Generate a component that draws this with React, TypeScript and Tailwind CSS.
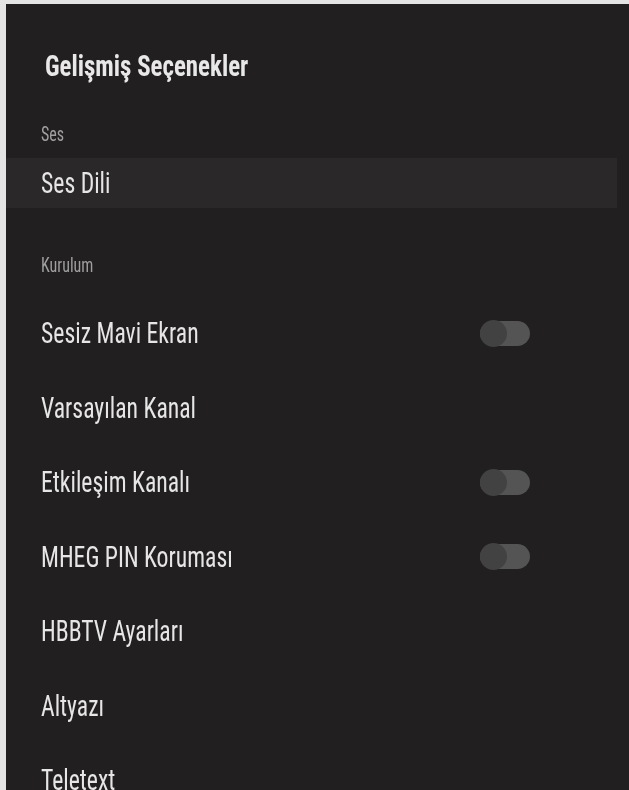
type Item = { label: string; toggle?: boolean };

const items: Item[] = [
  { label: 'Sesiz Mavi Ekran', toggle: true },
  { label: 'Varsayılan Kanal' },
  { label: 'Etkileşim Kanalı', toggle: true },
  { label: 'MHEG PIN Koruması', toggle: true },
  { label: 'HBBTV Ayarları' },
  { label: 'Altyazı' },
  { label: 'Teletext' },
];

function Toggle() {
  return (
    <div className="relative w-[50px] h-[25px] rounded-full bg-[#545454] blur-[0.7px]">
      <div className="absolute left-0 top-[-1px] w-[27px] h-[27px] rounded-full bg-[#424242]" />
    </div>
  );
}

export default function App() {
  return (
    <div className="h-[790px] overflow-hidden bg-[#e4e4e4] pt-[4px] pl-[6px] font-['Roboto_Condensed',_'Roboto',_sans-serif]">
      <div className="h-full bg-[#221f20] pt-[28px] flex flex-col">
        <div className="h-[68px] flex items-center pl-[39px] shrink-0">
          <span className="inline-block origin-left scale-x-[0.83] text-[30px] font-bold text-[#e8e8e8] leading-none whitespace-nowrap">
            Gelişmiş Seçenekler
          </span>
        </div>
        <div className="h-[48px] mt-[10px] flex items-center pl-[35px] shrink-0">
          <span className="inline-block origin-left scale-x-[0.8] text-[20px] text-[#a0a0a0] leading-none">Ses</span>
        </div>
        <div className="h-[50px] mr-[12px] bg-[#2a2829] flex items-center pl-[35px] shrink-0">
          <span className="inline-block origin-left scale-x-[0.79] text-[30px] text-[#e6e6e6] leading-none">Ses Dili</span>
        </div>
        <div className="h-[50px] mt-[32px] flex items-center pl-[35px] shrink-0">
          <span className="inline-block origin-left scale-x-[0.8] text-[20px] text-[#a0a0a0] leading-none">Kurulum</span>
        </div>
        <div className="mt-[6px] flex flex-col">
          {items.map((it) => (
            <div key={it.label} className="h-[74.5px] shrink-0 flex items-center pl-[35px]">
              <div className="w-[489px] flex items-center justify-between">
                <span className="inline-block origin-left scale-x-[0.79] text-[30px] text-[#e6e6e6] leading-none whitespace-nowrap">
                  {it.label}
                </span>
                {it.toggle ? <Toggle /> : null}
              </div>
            </div>
          ))}
        </div>
      </div>
    </div>
  );
}
